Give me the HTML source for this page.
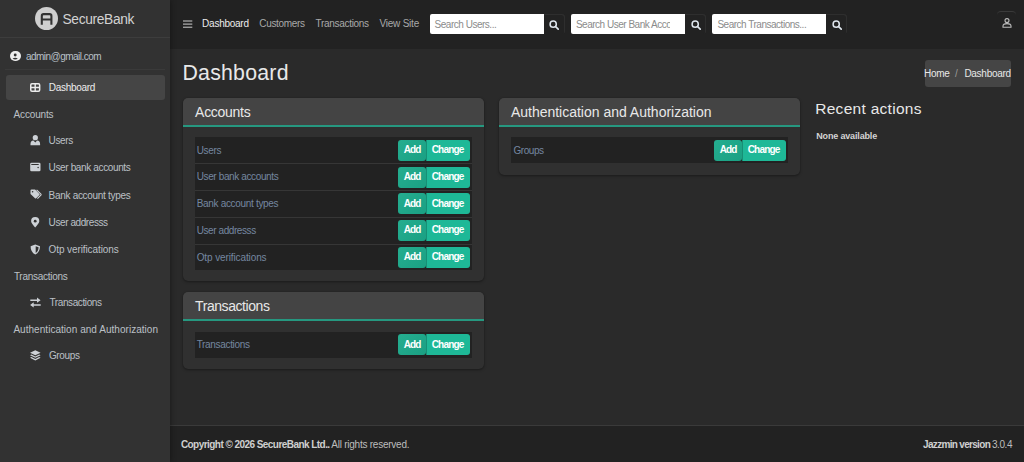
<!DOCTYPE html>
<html><head><meta charset="utf-8"><title>SecureBank Admin</title>
<style>
html,body{margin:0;padding:0;width:1024px;height:462px;overflow:hidden;background:#2a2a2a;}
body{position:relative;font-family:"Liberation Sans", sans-serif;}
.r{position:absolute;}
.t{position:absolute;white-space:nowrap;}
</style></head><body>
<div class="r" style="left:0px;top:0px;width:1024.00px;height:462.00px;background:#2a2a2a;"></div>
<div class="r" style="left:170px;top:0px;width:854.00px;height:49.00px;background:#222222;"></div>
<div class="r" style="left:170px;top:425px;width:854.00px;height:37.00px;background:#222222;"></div>
<div class="r" style="left:170px;top:425px;width:854.00px;height:1.00px;background:#3a3a3a;"></div>
<div class="r" style="left:0px;top:0px;width:170.00px;height:462.00px;background:#323232;box-shadow:0 0 6px rgba(0,0,0,.45);"></div>
<div class="r" style="left:0px;top:37px;width:170.00px;height:1.00px;background:#3d3d3d;"></div>
<div class="r" style="left:35px;top:7px;width:23px;height:23px;border-radius:50%;background:#cfcfcf;"></div>
<svg class="r" style="left:35px;top:7px" width="23" height="23" viewBox="0 0 23 23"><path d="M6.8 17.7 V8.9 Q6.8 7.15 8.55 7.15 H14.65 Q16.4 7.15 16.4 8.9 V17.7" fill="none" stroke="#333" stroke-width="2.1"/><path d="M6.8 12.5 H16.4" stroke="#333" stroke-width="2"/></svg>
<div class="t" id="brand" style="left:62.50px;top:9.52px;font-size:13.8px;line-height:20px;color:#d2d2d2;font-weight:400;letter-spacing:-0.356px;">SecureBank</div>
<div class="r" style="left:10.4px;top:50.8px;width:10.4px;height:10.4px;border-radius:50%;background:#ececec;"></div>
<svg class="r" style="left:10.4px;top:50.8px" width="11" height="11" viewBox="0 0 11 11"><circle cx="5.2" cy="4.0" r="1.45" fill="#2f2f2f"/><path d="M2.6 7.6 Q5.2 5.9 7.8 7.6 Q5.2 9.3 2.6 7.6 Z" fill="#2f2f2f"/></svg>
<div class="t" id="email" style="left:26.00px;top:46.83px;font-size:10px;line-height:20px;color:#b9c0c8;font-weight:400;letter-spacing:-0.529px;">admin@gmail.com</div>
<div class="r" style="left:5px;top:69px;width:160.00px;height:1.00px;background:#3a3a3a;"></div>
<div class="r" style="left:5.5px;top:75px;width:159.30px;height:24.70px;background:#454545;border-radius:3px;"></div>
<svg class="r" style="left:30.2px;top:82.6px" width="11" height="10" viewBox="0 0 11 10"><rect x="0.75" y="0.75" width="8.9" height="7.5" rx="1.2" fill="none" stroke="#ececec" stroke-width="1.5"/><path d="M5.2 0.75V8.25M0.75 4.5H9.65" stroke="#ececec" stroke-width="1.4"/></svg>
<div class="t" id="sbdash" style="left:48.80px;top:77.83px;font-size:10px;line-height:20px;color:#ececec;font-weight:400;letter-spacing:-0.300px;">Dashboard</div>
<div class="t" id="sbh1" style="left:13.60px;top:104.83px;font-size:10px;line-height:20px;color:#bcc0c6;font-weight:400;letter-spacing:-0.171px;">Accounts</div>
<div class="t" id="sbi0" style="left:48.60px;top:130.84px;font-size:10px;line-height:20px;color:#bcc0c6;font-weight:400;letter-spacing:-0.350px;">Users</div>
<div class="t" id="sbi1" style="left:48.60px;top:157.84px;font-size:10px;line-height:20px;color:#bcc0c6;font-weight:400;letter-spacing:-0.365px;">User bank accounts</div>
<div class="t" id="sbi2" style="left:48.60px;top:185.84px;font-size:10px;line-height:20px;color:#bcc0c6;font-weight:400;letter-spacing:-0.306px;">Bank account types</div>
<div class="t" id="sbi3" style="left:48.60px;top:212.84px;font-size:10px;line-height:20px;color:#bcc0c6;font-weight:400;letter-spacing:-0.417px;">User addresss</div>
<div class="t" id="sbi4" style="left:48.60px;top:239.84px;font-size:10px;line-height:20px;color:#bcc0c6;font-weight:400;letter-spacing:-0.100px;">Otp verifications</div>
<div class="t" id="sbh2" style="left:13.90px;top:266.84px;font-size:10px;line-height:20px;color:#bcc0c6;font-weight:400;letter-spacing:-0.273px;">Transactions</div>
<div class="t" id="sbi5" style="left:49.50px;top:292.84px;font-size:10px;line-height:20px;color:#bcc0c6;font-weight:400;letter-spacing:-0.400px;">Transactions</div>
<div class="t" id="sbh3" style="left:13.40px;top:319.84px;font-size:10px;line-height:20px;color:#bcc0c6;font-weight:400;letter-spacing:0.039px;">Authentication and Authorization</div>
<div class="t" id="sbi6" style="left:48.90px;top:345.84px;font-size:10px;line-height:20px;color:#bcc0c6;font-weight:400;letter-spacing:-0.360px;">Groups</div>
<svg class="r" style="left:30px;top:134px" width="11" height="12" viewBox="0 0 11 12"><circle cx="5.3" cy="3.7" r="2.6" fill="#cdd1d6"/><path d="M0.5 11.2 V9.9 Q0.5 6.9 3.4 6.6 L5.3 8.3 L7.2 6.6 Q10.1 6.9 10.1 9.9 V11.2 Z" fill="#cdd1d6"/><path d="M4.5 6.9 L5.3 8.6 L6.1 6.9 Z" fill="#323232"/></svg>
<svg class="r" style="left:30px;top:162px" width="11" height="10" viewBox="0 0 11 10"><rect x="0.2" y="0.8" width="10.3" height="8.4" rx="1.3" fill="#cdd1d6"/><rect x="1.3" y="2" width="7.4" height="1" fill="#323232"/><circle cx="8.1" cy="5.6" r="0.75" fill="#323232"/></svg>
<svg class="r" style="left:29.5px;top:189px" width="12" height="11" viewBox="0 0 12 11"><path d="M0.5 1.6 Q0.5 0.6 1.5 0.6 H5.1 L9.4 4.9 Q10 5.5 9.4 6.1 L6.2 9.3 Q5.6 9.9 5 9.3 L0.5 4.9 Z" fill="#cdd1d6"/><circle cx="2.6" cy="2.7" r="0.8" fill="#323232"/><path d="M6.6 0.8 L10.9 5.1 Q11.3 5.6 10.9 6.1 L7.4 9.6" fill="none" stroke="#cdd1d6" stroke-width="1.1"/></svg>
<svg class="r" style="left:31px;top:216.6px" width="9" height="11" viewBox="0 0 9 11"><path d="M4.2 10.6 C2.6 8.2 0.1 6 0.1 4.2 A4.1 4.1 0 0 1 8.3 4.2 C8.3 6 5.8 8.2 4.2 10.6 Z" fill="#cdd1d6"/><circle cx="4.2" cy="4.2" r="1.4" fill="#323232"/></svg>
<svg class="r" style="left:30px;top:243.5px" width="11" height="11" viewBox="0 0 11 11"><path d="M5.3 0.5 L10 2.3 Q10 8.2 5.3 10.6 Q0.6 8.2 0.6 2.3 Z" fill="#cdd1d6"/><path d="M5.7 2.2 L8.6 3.3 Q8.4 7.6 5.7 9 Z" fill="#323232"/></svg>
<svg class="r" style="left:30px;top:296.5px" width="11" height="11" viewBox="0 0 11 11"><path d="M0.3 3.2 H7.6 M10.7 7.9 H3.1" stroke="#cdd1d6" stroke-width="1.5"/><path d="M7 0.6 L10.6 3.2 L7 5.8 Z M3.7 5.3 L0.1 7.9 L3.7 10.5 Z" fill="#cdd1d6"/></svg>
<svg class="r" style="left:30px;top:349.5px" width="11" height="11" viewBox="0 0 11 11"><path d="M5.3 0.3 L10.6 2.8 L5.3 5.3 L0 2.8 Z M0 5.2 L1.4 4.6 L5.3 6.5 L9.2 4.6 L10.6 5.2 L5.3 7.8 Z M0 7.7 L1.4 7.1 L5.3 9 L9.2 7.1 L10.6 7.7 L5.3 10.4 Z" fill="#cdd1d6"/></svg>
<svg class="r" style="left:183px;top:19.6px" width="10" height="8" viewBox="0 0 10 8"><path d="M0 1H9.3M0 4.1H9.3M0 7.2H9.3" stroke="#cfcfcf" stroke-width="1"/></svg>
<div class="t" id="nv0" style="left:202.10px;top:13.84px;font-size:10px;line-height:20px;color:#ececec;font-weight:400;letter-spacing:-0.250px;">Dashboard</div>
<div class="t" id="nv1" style="left:259.30px;top:13.84px;font-size:10px;line-height:20px;color:#a9a9a9;font-weight:400;letter-spacing:-0.325px;">Customers</div>
<div class="t" id="nv2" style="left:315.60px;top:13.84px;font-size:10px;line-height:20px;color:#a9a9a9;font-weight:400;letter-spacing:-0.309px;">Transactions</div>
<div class="t" id="nv3" style="left:379.50px;top:13.84px;font-size:10px;line-height:20px;color:#a9a9a9;font-weight:400;letter-spacing:-0.225px;">View Site</div>
<div class="r" style="left:430px;top:14.4px;width:114.00px;height:19.80px;background:#ffffff;border-radius:2px 0 0 2px;"></div>
<div class="t" id="ph0" style="left:434.60px;top:14.84px;font-size:10px;line-height:20px;color:#8b8b8b;font-weight:400;letter-spacing:-0.486px;">Search Users...</div>
<div class="r" style="left:544px;top:14.4px;width:20.50px;height:19.80px;background:#222222;border-radius:0 3px 3px 0;box-shadow:inset -1px 1px 0 #2e2e2e;"></div>
<svg class="r" style="left:549.4px;top:19.8px" width="10" height="10" viewBox="0 0 10 10"><circle cx="4.2" cy="4.2" r="3.1" fill="none" stroke="#dfe6ee" stroke-width="1.5"/><path d="M6.5 6.5L9.2 9.2" stroke="#dfe6ee" stroke-width="1.7" stroke-linecap="round"/></svg>
<div class="r" style="left:571.3px;top:14.4px;width:114.00px;height:19.80px;background:#ffffff;border-radius:2px 0 0 2px;"></div>
<div class="t" style="left:575.90px;top:14.84px;width:93.80px;overflow:hidden;font-size:10px;line-height:20px;color:#8b8b8b;letter-spacing:-0.486px;">Search User Bank Account</div>
<div class="r" style="left:685.3px;top:14.4px;width:20.50px;height:19.80px;background:#222222;border-radius:0 3px 3px 0;box-shadow:inset -1px 1px 0 #2e2e2e;"></div>
<svg class="r" style="left:690.6999999999999px;top:19.8px" width="10" height="10" viewBox="0 0 10 10"><circle cx="4.2" cy="4.2" r="3.1" fill="none" stroke="#dfe6ee" stroke-width="1.5"/><path d="M6.5 6.5L9.2 9.2" stroke="#dfe6ee" stroke-width="1.7" stroke-linecap="round"/></svg>
<div class="r" style="left:712.2px;top:14.4px;width:114.00px;height:19.80px;background:#ffffff;border-radius:2px 0 0 2px;"></div>
<div class="t" id="ph2" style="left:717.40px;top:14.84px;font-size:10px;line-height:20px;color:#8b8b8b;font-weight:400;letter-spacing:-0.486px;">Search Transactions...</div>
<div class="r" style="left:826.2px;top:14.4px;width:20.50px;height:19.80px;background:#222222;border-radius:0 3px 3px 0;box-shadow:inset -1px 1px 0 #2e2e2e;"></div>
<svg class="r" style="left:831.6px;top:19.8px" width="10" height="10" viewBox="0 0 10 10"><circle cx="4.2" cy="4.2" r="3.1" fill="none" stroke="#dfe6ee" stroke-width="1.5"/><path d="M6.5 6.5L9.2 9.2" stroke="#dfe6ee" stroke-width="1.7" stroke-linecap="round"/></svg>
<div class="r" style="left:997px;top:10.6px;width:19px;height:24px;border-radius:4px;border-top:1px solid #3a3a3a;"></div>
<svg class="r" style="left:1001.5px;top:18.4px" width="10" height="10" viewBox="0 0 10 10"><circle cx="5" cy="2.6" r="2" fill="none" stroke="#bdbdbd" stroke-width="1.1"/><path d="M1 9.3 V8 Q1 5.6 5 5.6 Q9 5.6 9 8 V9.3 Z" fill="none" stroke="#bdbdbd" stroke-width="1.1"/></svg>
<div class="t" id="title" style="left:182.50px;top:62.62px;font-size:21.3px;line-height:20px;color:#e8e8e8;font-weight:400;letter-spacing:0.225px;">Dashboard</div>
<div class="r" style="left:925px;top:59.8px;width:85.80px;height:26.90px;background:#454545;border-radius:3px;"></div>
<div class="t" id="bc0" style="left:924.00px;top:63.83px;font-size:10px;line-height:20px;color:#e8e8e8;font-weight:400;letter-spacing:-0.267px;">Home</div>
<div class="t" id="bc1" style="left:955.00px;top:63.83px;font-size:10px;line-height:20px;color:#9a9a9a;font-weight:400;letter-spacing:0.000px;">/</div>
<div class="t" id="bc2" style="left:964.40px;top:63.83px;font-size:10px;line-height:20px;color:#e8e8e8;font-weight:400;letter-spacing:-0.275px;">Dashboard</div>
<div class="r" style="left:183.2px;top:97.7px;width:300.60px;height:183.50px;background:#303030;border-radius:5px;box-shadow:0 0 1px rgba(0,0,0,.3),0 1px 3px rgba(0,0,0,.35);"></div>
<div class="r" style="left:183.2px;top:97.7px;width:300.60px;height:27.20px;background:#444444;border-radius:5px 5px 0 0;"></div>
<div class="r" style="left:183.2px;top:124.9px;width:300.60px;height:2.00px;background:#269880;"></div>
<div class="t" id="acch" style="left:195.10px;top:102.45px;font-size:14px;line-height:20px;color:#e8e8e8;font-weight:400;letter-spacing:-0.286px;">Accounts</div>
<div class="r" style="left:194.7px;top:137.3px;width:277.40px;height:133.00px;background:#222222;"></div>
<div class="t" id="accr0" style="left:196.70px;top:140.84px;font-size:10px;line-height:20px;color:#7587a0;font-weight:400;letter-spacing:-0.300px;">Users</div>
<div class="r" style="left:397.90000000000003px;top:139.8px;width:27.80px;height:21.10px;background:#1caa8b;border-radius:3px;background-image:linear-gradient(135deg,rgba(255,255,255,.04),rgba(0,0,0,.06));"></div>
<div class="r" style="left:426.00000000000006px;top:139.8px;width:44.00px;height:21.10px;background:#1eb897;border-radius:1px 3px 3px 1px;"></div>
<div class="r" style="left:425.70000000000005px;top:139.8px;width:0.30px;height:21.10px;background:#178f75;"></div>
<div class="t" id="acca0" style="left:403.80px;top:139.84px;font-size:10px;line-height:20px;color:#ffffff;font-weight:700;letter-spacing:-1.000px;">Add</div>
<div class="t" id="accc0" style="left:431.70px;top:139.84px;font-size:10px;line-height:20px;color:#ffffff;font-weight:700;letter-spacing:-0.800px;">Change</div>
<div class="r" style="left:194.7px;top:163.10000000000002px;width:277.40px;height:1.00px;background:#363636;"></div>
<div class="t" id="accr1" style="left:196.70px;top:166.84px;font-size:10px;line-height:20px;color:#7587a0;font-weight:400;letter-spacing:-0.376px;">User bank accounts</div>
<div class="r" style="left:397.90000000000003px;top:166.60000000000002px;width:27.80px;height:21.10px;background:#1caa8b;border-radius:3px;background-image:linear-gradient(135deg,rgba(255,255,255,.04),rgba(0,0,0,.06));"></div>
<div class="r" style="left:426.00000000000006px;top:166.60000000000002px;width:44.00px;height:21.10px;background:#1eb897;border-radius:1px 3px 3px 1px;"></div>
<div class="r" style="left:425.70000000000005px;top:166.60000000000002px;width:0.30px;height:21.10px;background:#178f75;"></div>
<div class="t" id="acca1" style="left:403.80px;top:166.84px;font-size:10px;line-height:20px;color:#ffffff;font-weight:700;letter-spacing:-1.000px;">Add</div>
<div class="t" id="accc1" style="left:431.70px;top:166.84px;font-size:10px;line-height:20px;color:#ffffff;font-weight:700;letter-spacing:-0.800px;">Change</div>
<div class="r" style="left:194.7px;top:189.9px;width:277.40px;height:1.00px;background:#363636;"></div>
<div class="t" id="accr2" style="left:196.70px;top:193.84px;font-size:10px;line-height:20px;color:#7587a0;font-weight:400;letter-spacing:-0.318px;">Bank account types</div>
<div class="r" style="left:397.90000000000003px;top:193.4px;width:27.80px;height:21.10px;background:#1caa8b;border-radius:3px;background-image:linear-gradient(135deg,rgba(255,255,255,.04),rgba(0,0,0,.06));"></div>
<div class="r" style="left:426.00000000000006px;top:193.4px;width:44.00px;height:21.10px;background:#1eb897;border-radius:1px 3px 3px 1px;"></div>
<div class="r" style="left:425.70000000000005px;top:193.4px;width:0.30px;height:21.10px;background:#178f75;"></div>
<div class="t" id="acca2" style="left:403.80px;top:193.84px;font-size:10px;line-height:20px;color:#ffffff;font-weight:700;letter-spacing:-1.000px;">Add</div>
<div class="t" id="accc2" style="left:431.70px;top:193.84px;font-size:10px;line-height:20px;color:#ffffff;font-weight:700;letter-spacing:-0.800px;">Change</div>
<div class="r" style="left:194.7px;top:216.70000000000002px;width:277.40px;height:1.00px;background:#363636;"></div>
<div class="t" id="accr3" style="left:196.70px;top:220.84px;font-size:10px;line-height:20px;color:#7587a0;font-weight:400;letter-spacing:-0.417px;">User addresss</div>
<div class="r" style="left:397.90000000000003px;top:220.20000000000002px;width:27.80px;height:21.10px;background:#1caa8b;border-radius:3px;background-image:linear-gradient(135deg,rgba(255,255,255,.04),rgba(0,0,0,.06));"></div>
<div class="r" style="left:426.00000000000006px;top:220.20000000000002px;width:44.00px;height:21.10px;background:#1eb897;border-radius:1px 3px 3px 1px;"></div>
<div class="r" style="left:425.70000000000005px;top:220.20000000000002px;width:0.30px;height:21.10px;background:#178f75;"></div>
<div class="t" id="acca3" style="left:403.80px;top:219.84px;font-size:10px;line-height:20px;color:#ffffff;font-weight:700;letter-spacing:-1.000px;">Add</div>
<div class="t" id="accc3" style="left:431.70px;top:219.84px;font-size:10px;line-height:20px;color:#ffffff;font-weight:700;letter-spacing:-0.800px;">Change</div>
<div class="r" style="left:194.7px;top:243.5px;width:277.40px;height:1.00px;background:#363636;"></div>
<div class="t" id="accr4" style="left:196.70px;top:247.84px;font-size:10px;line-height:20px;color:#7587a0;font-weight:400;letter-spacing:-0.112px;">Otp verifications</div>
<div class="r" style="left:397.90000000000003px;top:247.0px;width:27.80px;height:21.10px;background:#1caa8b;border-radius:3px;background-image:linear-gradient(135deg,rgba(255,255,255,.04),rgba(0,0,0,.06));"></div>
<div class="r" style="left:426.00000000000006px;top:247.0px;width:44.00px;height:21.10px;background:#1eb897;border-radius:1px 3px 3px 1px;"></div>
<div class="r" style="left:425.70000000000005px;top:247.0px;width:0.30px;height:21.10px;background:#178f75;"></div>
<div class="t" id="acca4" style="left:403.80px;top:246.84px;font-size:10px;line-height:20px;color:#ffffff;font-weight:700;letter-spacing:-1.000px;">Add</div>
<div class="t" id="accc4" style="left:431.70px;top:246.84px;font-size:10px;line-height:20px;color:#ffffff;font-weight:700;letter-spacing:-0.800px;">Change</div>
<div class="r" style="left:183.2px;top:292.2px;width:300.60px;height:76.50px;background:#303030;border-radius:5px;box-shadow:0 0 1px rgba(0,0,0,.3),0 1px 3px rgba(0,0,0,.35);"></div>
<div class="r" style="left:183.2px;top:292.2px;width:300.60px;height:27.20px;background:#444444;border-radius:5px 5px 0 0;"></div>
<div class="r" style="left:183.2px;top:319.4px;width:300.60px;height:2.00px;background:#269880;"></div>
<div class="t" id="trnh" style="left:195.10px;top:296.45px;font-size:14px;line-height:20px;color:#e8e8e8;font-weight:400;letter-spacing:-0.436px;">Transactions</div>
<div class="r" style="left:194.7px;top:331.8px;width:277.40px;height:25.80px;background:#222222;"></div>
<div class="t" id="trnr0" style="left:196.70px;top:334.84px;font-size:10px;line-height:20px;color:#7587a0;font-weight:400;letter-spacing:-0.327px;">Transactions</div>
<div class="r" style="left:397.90000000000003px;top:334.3px;width:27.80px;height:21.10px;background:#1caa8b;border-radius:3px;background-image:linear-gradient(135deg,rgba(255,255,255,.04),rgba(0,0,0,.06));"></div>
<div class="r" style="left:426.00000000000006px;top:334.3px;width:44.00px;height:21.10px;background:#1eb897;border-radius:1px 3px 3px 1px;"></div>
<div class="r" style="left:425.70000000000005px;top:334.3px;width:0.30px;height:21.10px;background:#178f75;"></div>
<div class="t" id="trna0" style="left:403.80px;top:334.84px;font-size:10px;line-height:20px;color:#ffffff;font-weight:700;letter-spacing:-1.000px;">Add</div>
<div class="t" id="trnc0" style="left:431.70px;top:334.84px;font-size:10px;line-height:20px;color:#ffffff;font-weight:700;letter-spacing:-0.800px;">Change</div>
<div class="r" style="left:499.4px;top:97.8px;width:300.40px;height:76.80px;background:#303030;border-radius:5px;box-shadow:0 0 1px rgba(0,0,0,.3),0 1px 3px rgba(0,0,0,.35);"></div>
<div class="r" style="left:499.4px;top:97.8px;width:300.40px;height:27.20px;background:#444444;border-radius:5px 5px 0 0;"></div>
<div class="r" style="left:499.4px;top:125.0px;width:300.40px;height:2.00px;background:#269880;"></div>
<div class="t" id="auth" style="left:510.90px;top:102.45px;font-size:14px;line-height:20px;color:#e8e8e8;font-weight:400;letter-spacing:-0.006px;">Authentication and Authorization</div>
<div class="r" style="left:510.9px;top:137.4px;width:277.20px;height:25.80px;background:#222222;"></div>
<div class="t" id="autr0" style="left:513.50px;top:140.84px;font-size:10px;line-height:20px;color:#7587a0;font-weight:400;letter-spacing:-0.440px;">Groups</div>
<div class="r" style="left:713.8999999999999px;top:139.9px;width:27.80px;height:21.10px;background:#1caa8b;border-radius:3px;background-image:linear-gradient(135deg,rgba(255,255,255,.04),rgba(0,0,0,.06));"></div>
<div class="r" style="left:741.9999999999999px;top:139.9px;width:44.00px;height:21.10px;background:#1eb897;border-radius:1px 3px 3px 1px;"></div>
<div class="r" style="left:741.6999999999998px;top:139.9px;width:0.30px;height:21.10px;background:#178f75;"></div>
<div class="t" id="auta0" style="left:719.80px;top:139.84px;font-size:10px;line-height:20px;color:#ffffff;font-weight:700;letter-spacing:-1.000px;">Add</div>
<div class="t" id="autc0" style="left:747.70px;top:139.84px;font-size:10px;line-height:20px;color:#ffffff;font-weight:700;letter-spacing:-0.800px;">Change</div>
<div class="t" id="ra" style="left:815.20px;top:98.63px;font-size:15.5px;line-height:20px;color:#e8e8e8;font-weight:400;letter-spacing:0.292px;">Recent actions</div>
<div class="t" id="na" style="left:816.20px;top:126.18px;font-size:9px;line-height:20px;color:#d4d4d4;font-weight:700;letter-spacing:-0.154px;">None available</div>
<div class="t" id="f0" style="left:180.90px;top:434.84px;font-size:10px;line-height:20px;color:#cfcfcf;font-weight:700;letter-spacing:-0.550px;">Copyright © 2026 SecureBank Ltd..</div>
<div class="t" id="f1" style="left:331.30px;top:434.84px;font-size:10px;line-height:20px;color:#bdbdbd;font-weight:400;letter-spacing:-0.242px;">All rights reserved.</div>
<div class="t" id="f2" style="left:923.10px;top:434.84px;font-size:10px;line-height:20px;color:#cfcfcf;font-weight:700;letter-spacing:-0.686px;">Jazzmin version</div>
<div class="t" id="f3" style="left:992.00px;top:434.84px;font-size:10px;line-height:20px;color:#bdbdbd;font-weight:400;letter-spacing:-0.450px;">3.0.4</div>
</body></html>
